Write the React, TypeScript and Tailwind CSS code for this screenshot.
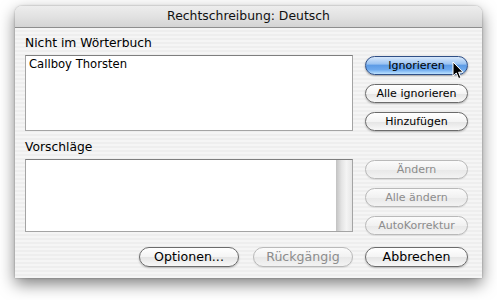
import React from "react";

const font = { fontFamily: '"DejaVu Sans", "Lucida Grande", sans-serif' };

type BtnProps = { label: string; w?: string; kind?: "normal" | "default" | "disabled" };

function AquaButton({ label, w = "w-[103px] h-[19px] text-[11px]", kind = "normal" }: BtnProps) {
  const base = "relative flex items-center justify-center rounded-full leading-none shrink-0 " + w;
  if (kind === "default") {
    return (
      <div
        className={
          base +
          " border border-[#2f4f86] text-black shadow-[0_1px_2px_rgba(0,0,0,0.35)] bg-[linear-gradient(#d8e8fb_0%,#9cc4f2_40%,#5e9ce6_50%,#6eaaee_75%,#bde2ff_100%)]"
        }
      >
        {label}
      </div>
    );
  }
  if (kind === "disabled") {
    return (
      <div
        className={
          base +
          " border border-[#b9b9b9] text-[#8c8c8c] shadow-[0_1px_1px_rgba(0,0,0,0.08)] bg-[linear-gradient(#fbfbfb_0%,#f1f1f1_50%,#e8e8e8_51%,#f3f3f3_100%)]"
        }
      >
        {label}
      </div>
    );
  }
  return (
    <div
      className={
        base +
        " border border-[#6b6b6b] text-black shadow-[0_1px_2px_rgba(0,0,0,0.25)] bg-[linear-gradient(#ffffff_0%,#f4f4f4_50%,#e4e4e4_51%,#f8f8f8_100%)]"
      }
    >
      {label}
    </div>
  );
}

export default function App() {
  return (
    <div className="w-[497px] h-[300px] bg-white overflow-hidden" style={font}>
      <div className="ml-[15px] mt-[6px] w-[467px] h-[272px] flex flex-col rounded-t-[7px] shadow-[0_6px_16px_rgba(0,0,0,0.5),0_0_2px_rgba(0,0,0,0.35)] bg-[repeating-linear-gradient(180deg,#eeeeee_0px,#eeeeee_2px,#f5f5f5_2px,#f5f5f5_4px)]">
        {/* title bar */}
        <div className="h-[22px] shrink-0 rounded-t-[7px] flex items-center justify-center text-[12.4px] text-[#111] border-b border-[#8e8e8e] bg-[linear-gradient(#ededed_0%,#e2e2e2_50%,#d4d4d4_100%)]">
          Rechtschreibung: Deutsch
        </div>
        {/* body */}
        <div className="flex flex-col pl-[10px] pr-[14px] pt-[8px] pb-[11px] flex-1">
          {/* row 1 */}
          <div className="flex gap-[12px]">
            <div className="w-[328px] flex flex-col">
              <div className="h-[15px] leading-[15px] text-[12.3px] text-black mb-[4px]">Nicht im Wörterbuch</div>
              <div className="h-[76px] bg-white border border-[#a4a4a4] border-t-[#7e7e7e] px-[3px] pt-[1px] text-[11.6px] leading-[15px] text-black">
                Callboy Thorsten
              </div>
            </div>
            <div className="relative flex flex-col gap-[9px] mt-[20px]">
              <AquaButton label="Ignorieren" kind="default" />
              <AquaButton label="Alle ignorieren" />
              <AquaButton label="Hinzufügen" />
              <svg
                className="absolute left-[87px] top-[5px]"
                width="13"
                height="19"
                viewBox="0 0 13 19"
              >
                <path
                  d="M1 1 L1 15 L4.3 12 L6.6 17.6 L8.8 16.7 L6.6 11.2 L11 11.2 Z"
                  fill="#000"
                  stroke="#fff"
                  strokeWidth="1"
                  strokeLinejoin="round"
                />
              </svg>
            </div>
          </div>
          {/* row 2 */}
          <div className="flex gap-[12px] mt-[9px]">
            <div className="w-[328px] flex flex-col">
              <div className="h-[15px] leading-[15px] text-[12.3px] text-black mb-[4px]">Vorschläge</div>
              <div className="h-[73px] bg-white border border-[#a4a4a4] border-t-[#7e7e7e] flex justify-end">
                <div className="w-[16px] h-full bg-[linear-gradient(90deg,#c2c2c2_0%,#e4e4e4_35%,#f4f4f4_65%,#e6e6e6_100%)]" />
              </div>
            </div>
            <div className="flex flex-col gap-[9px] mt-[20px]">
              <AquaButton label="Ändern" kind="disabled" />
              <AquaButton label="Alle ändern" kind="disabled" />
              <AquaButton label="AutoKorrektur" kind="disabled" />
            </div>
          </div>
          {/* bottom buttons */}
          <div className="flex justify-end mt-auto">
            <AquaButton label="Optionen..." w="w-[100px] h-[20px] text-[12.6px]" />
            <div className="w-[14px]" />
            <AquaButton label="Rückgängig" w="w-[100px] h-[20px] text-[12.6px]" kind="disabled" />
            <div className="w-[12px]" />
            <AquaButton label="Abbrechen" w="w-[103px] h-[20px] text-[12.6px]" />
          </div>
        </div>
      </div>
    </div>
  );
}
